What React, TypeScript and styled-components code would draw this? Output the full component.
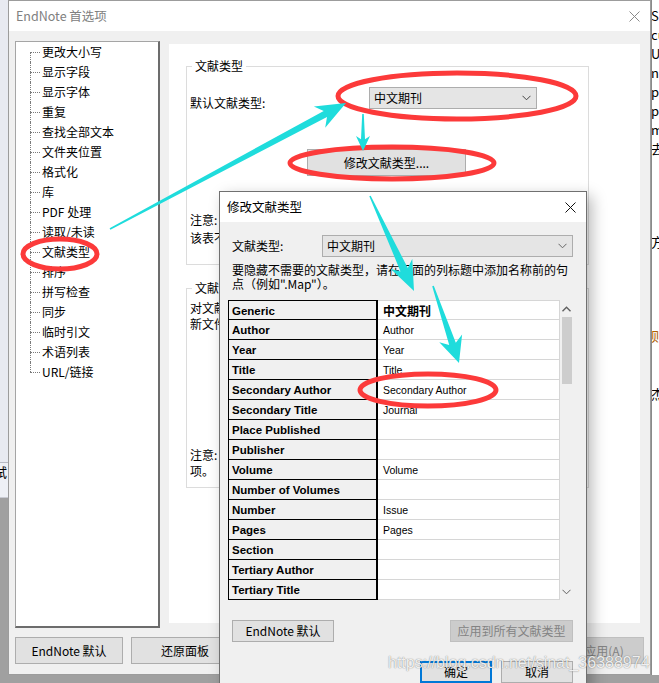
import React from 'react';
import styled, { createGlobalStyle, css } from 'styled-components';

const GlobalStyle = createGlobalStyle`
  html, body {
    margin: 0;
    padding: 0;
    width: 659px;
    height: 683px;
    overflow: hidden;
    background: #a0a0a0;
  }
  body {
    font-family: "Noto Sans CJK SC", "Noto Sans", sans-serif;
    font-size: 12px;
    color: #000;
  }
  * {
    box-sizing: border-box;
  }
`;

const Page = styled.div`
  position: relative;
  width: 659px;
  height: 683px;
  display: flex;
  align-items: flex-start;
  overflow: hidden;
`;

const LeftStrip = styled.div`
  width: 8px;
  height: 683px;
  display: flex;
  flex-direction: column;
`;

const LeftTop = styled.div`
  height: 462px;
  background: #e8eaf1;
`;

const LeftBand = styled.div`
  height: 36px;
  background: #eef0f5;
  border-top: 1px solid #b8bac4;
  border-bottom: 1px solid #c8cad2;
  overflow: hidden;
  font-size: 13px;
  line-height: 16px;
  padding-top: 1px;
  text-indent: -6px;
  white-space: nowrap;
`;

const LeftRest = styled.div`
  flex: 1;
  background: #a0a0a0;
`;

const RightStrip = styled.div`
  width: 8px;
  height: 675px;
  background: #fff;
  border-left: 1px solid #8a8a8a;
  overflow: hidden;
  display: flex;
  flex-direction: column;
  padding-top: 6px;
  font-size: 13px;
  line-height: 19px;
  white-space: nowrap;
`;

const StripLine = styled.div<{ $gap?: number; $tone?: string }>`
  margin-top: ${p => p.$gap ?? 0}px;
  color: ${p => p.$tone ?? '#000'};
  text-indent: -1px;
`;

const MainWindow = styled.div`
  width: 643px;
  height: 675px;
  background: #f0f0f0;
  border: 1px solid #9c9c9c;
  display: flex;
  flex-direction: column;
`;

const TitleBar = styled.div<{ $active?: boolean }>`
  height: 30px;
  flex: none;
  background: #fff;
  display: flex;
  align-items: center;
  justify-content: space-between;
  padding: 0 10px 0 7px;
  color: ${p => (p.$active ? '#000' : '#808080')};
  font-size: 12.5px;
  line-height: 16px;
`;

const CloseIcon: React.FC<{ color: string }> = ({ color }) => (
  <svg width="11" height="11" viewBox="0 0 11 11">
    <path d="M0.5 0.5 L10.5 10.5 M10.5 0.5 L0.5 10.5" stroke={color} strokeWidth="1" fill="none" />
  </svg>
);

const ChevronDown: React.FC<{ color?: string }> = ({ color = '#444' }) => (
  <svg width="9" height="6" viewBox="0 0 9 6">
    <path d="M0.5 0.8 L4.5 4.8 L8.5 0.8" stroke={color} strokeWidth="1" fill="none" />
  </svg>
);

const ChevronUp: React.FC = () => (
  <svg width="9" height="6" viewBox="0 0 9 6">
    <path d="M0.5 5.2 L4.5 1.2 L8.5 5.2" stroke="#606060" strokeWidth="1.4" fill="none" />
  </svg>
);

const WindowBody = styled.div`
  flex: 1;
  padding: 10px 10px 0 6px;
  display: flex;
  flex-direction: column;
`;

const MainRow = styled.div`
  display: flex;
  align-items: flex-start;
  gap: 9px;
`;

const TreePanel = styled.div`
  width: 145px;
  height: 587px;
  background: #fff;
  border-top: 1px solid #a5a5a5;
  border-left: 1px solid #a5a5a5;
  border-right: 2px solid #6c6c6c;
  border-bottom: 2px solid #6c6c6c;
`;

const TreeItem = styled.div<{ $first?: boolean; $last?: boolean }>`
  position: relative;
  height: 20px;
  line-height: 20px;
  padding-left: 26px;
  white-space: nowrap;

  &::before {
    content: '';
    position: absolute;
    left: 14px;
    top: 10px;
    width: 10px;
    border-top: 1px dotted #7a7a7a;
  }

  &::after {
    content: '';
    position: absolute;
    left: 14px;
    top: ${p => (p.$first ? 10 : 0)}px;
    bottom: ${p => (p.$last ? 10 : 0)}px;
    border-left: 1px dotted #7a7a7a;
  }
`;

const PrefPanel = styled.div`
  width: 471px;
  height: 579px;
  margin-top: 3px;
  background: #fff;
  padding: 14px 0 0 17px;
  display: flex;
  flex-direction: column;
  gap: 15px;
`;

const GroupBox = styled.fieldset<{ $height: number }>`
  margin: 0;
  width: 403px;
  height: ${p => p.$height}px;
  min-width: 0;
  border: 1px solid #dcdcdc;
  padding: 0 3px;
`;

const Legend = styled.legend`
  margin-left: 2px;
  padding: 0 3px;
  line-height: 16px;
  font-size: 12px;
`;

const DefaultRow = styled.div`
  display: flex;
  align-items: flex-start;
  margin-top: 13px;
`;

const FieldLabel = styled.div<{ $width: number; $top?: number }>`
  width: ${p => p.$width}px;
  flex: none;
  padding-top: ${p => p.$top ?? 0}px;
  line-height: 16px;
  white-space: nowrap;
`;

const SelectBox = styled.div<{ $width?: number }>`
  ${p =>
    p.$width
      ? css`
          width: ${p.$width}px;
        `
      : css`
          flex: 1;
        `}
  height: 22px;
  background: #e5e5e5;
  border: 1px solid #adadad;
  display: flex;
  align-items: center;
  justify-content: space-between;
  padding: 0 5px 0 4px;
  font-size: 12px;
  line-height: 16px;
`;

const ButtonRow = styled.div<{ $top: number; $left?: number; $justify?: string; $gap?: number }>`
  display: flex;
  margin-top: ${p => p.$top}px;
  padding-left: ${p => p.$left ?? 0}px;
  justify-content: ${p => p.$justify ?? 'flex-start'};
  gap: ${p => p.$gap ?? 0}px;
`;

const WinButton = styled.div<{ $width: number; $height: number; $disabled?: boolean; $focused?: boolean }>`
  width: ${p => p.$width}px;
  height: ${p => p.$height}px;
  flex: none;
  display: flex;
  align-items: center;
  justify-content: center;
  background: ${p => (p.$disabled ? '#cccccc' : '#e1e1e1')};
  border: ${p => (p.$focused ? '2px solid #0078d7' : `1px solid ${p.$disabled ? '#bfbfbf' : '#adadad'}`)};
  color: ${p => (p.$disabled ? '#838383' : '#000')};
  font-size: 12px;
  line-height: 16px;
  white-space: nowrap;
`;

const NoteText = styled.div<{ $top: number; $lh: number }>`
  margin-top: ${p => p.$top}px;
  line-height: ${p => p.$lh}px;
  white-space: pre;
`;

const FooterRow = styled.div`
  display: flex;
  gap: 8px;
  margin-top: 9px;
`;

const FooterSpacer = styled.div`
  flex: 1;
`;

const ApplyWrap = styled.div`
  margin-right: -4px;
`;

/* ---------- dialog ---------- */

const Dialog = styled.div`
  position: absolute;
  left: 219px;
  top: 191px;
  width: 368px;
  height: 500px;
  background: #f0f0f0;
  border: 1px solid #707070;
  box-shadow: 5px 5px 14px rgba(0, 0, 0, 0.28);
  display: flex;
  flex-direction: column;
  z-index: 5;
`;

const DialogBody = styled.div`
  padding: 13px 13px 0 12px;
  display: flex;
  flex-direction: column;
`;

const TypeRow = styled.div`
  display: flex;
  align-items: center;
  height: 22px;
`;

const Hint = styled.div`
  margin-top: 6px;
  line-height: 14px;
  white-space: pre;
  margin-right: -12px;
`;

const TableArea = styled.div`
  display: flex;
  margin-top: 9px;
  margin-left: -4px;
  height: 300px;
`;

const FieldGrid = styled.div`
  display: grid;
  grid-template-columns: 150px 182px;
  grid-auto-rows: 20px;
  align-content: start;
`;

const NameCell = styled.div<{ $first?: boolean }>`
  background: #f0f0f0;
  border-left: 1px solid #000;
  border-right: 2px solid #000;
  border-bottom: 1px solid #000;
  border-top: ${p => (p.$first ? '1px solid #000' : 'none')};
  padding: 1px 0 0 3px;
  font-family: "Liberation Sans", Arial, sans-serif;
  font-weight: bold;
  font-size: 11.5px;
  line-height: 18px;
  white-space: nowrap;
  overflow: hidden;
`;

const ValueCell = styled.div<{ $first?: boolean }>`
  background: #fff;
  border-right: 1px solid #d6d6d6;
  border-bottom: 1px solid #d6d6d6;
  border-top: ${p => (p.$first ? '1px solid #d6d6d6' : 'none')};
  padding: 1px 0 0 5px;
  font-family: ${p => (p.$first ? '"Noto Sans CJK SC", sans-serif' : '"Liberation Sans", Arial, sans-serif')};
  font-weight: ${p => (p.$first ? 'bold' : 'normal')};
  font-size: ${p => (p.$first ? '12px' : '10.5px')};
  line-height: 18px;
  white-space: nowrap;
  overflow: hidden;
`;

const ScrollBar = styled.div`
  width: 17px;
  height: 300px;
  background: #f0f0f0;
  display: flex;
  flex-direction: column;
`;

const ScrollArrow = styled.div`
  height: 17px;
  flex: none;
  display: flex;
  align-items: center;
  justify-content: center;
`;

const ScrollThumb = styled.div`
  height: 67px;
  margin: 0 1px 0 2px;
  background: #cdcdcd;
`;

const ScrollGap = styled.div`
  flex: 1;
`;

const Watermark = styled.div`
  position: absolute;
  left: 388px;
  top: 653px;
  z-index: 8;
  font-family: "Liberation Sans", Arial, sans-serif;
  font-size: 16px;
  line-height: 20px;
  color: rgba(255, 255, 255, 0.88);
  text-shadow: 0 0 1px rgba(0, 0, 0, 0.45), 0 0 2px rgba(0, 0, 0, 0.15);
  white-space: nowrap;
`;

const Annotations = styled.svg`
  position: absolute;
  left: 0;
  top: 0;
  z-index: 10;
  pointer-events: none;
`;

const treeItems = [
  '更改大小写', '显示字段', '显示字体', '重复', '查找全部文本', '文件夹位置', '格式化', '库',
  'PDF 处理', '读取/未读', '文献类型', '排序', '拼写检查', '同步', '临时引文', '术语列表', 'URL/链接',
];

const fields: [string, string][] = [
  ['Generic', '中文期刊'],
  ['Author', 'Author'],
  ['Year', 'Year'],
  ['Title', 'Title'],
  ['Secondary Author', 'Secondary Author'],
  ['Secondary Title', 'Journal'],
  ['Place Published', ''],
  ['Publisher', ''],
  ['Volume', 'Volume'],
  ['Number of Volumes', ''],
  ['Number', 'Issue'],
  ['Pages', 'Pages'],
  ['Section', ''],
  ['Tertiary Author', ''],
  ['Tertiary Title', ''],
];

// tapered arrow like the screenshot annotation tool draws
function arrowPoints(x1: number, y1: number, x2: number, y2: number, head: number, half: number, shaft: number) {
  const dx = x2 - x1;
  const dy = y2 - y1;
  const len = Math.hypot(dx, dy);
  const ux = dx / len;
  const uy = dy / len;
  const px = -uy;
  const py = ux;
  const neckX = x2 - ux * head * 0.78;
  const neckY = y2 - uy * head * 0.78;
  const barbX = x2 - ux * head;
  const barbY = y2 - uy * head;
  const pts = [
    [x1 + px * 0.8, y1 + py * 0.8],
    [neckX + px * shaft, neckY + py * shaft],
    [barbX + px * half, barbY + py * half],
    [x2, y2],
    [barbX - px * half, barbY - py * half],
    [neckX - px * shaft, neckY - py * shaft],
    [x1 - px * 0.8, y1 - py * 0.8],
  ];
  return pts.map(p => `${p[0].toFixed(1)},${p[1].toFixed(1)}`).join(' ');
}

const arrows = [
  { x1: 110, y1: 229, x2: 346, y2: 103, head: 30, half: 12, shaft: 3.5 },
  { x1: 363, y1: 114, x2: 363, y2: 151, head: 15, half: 7, shaft: 2 },
  { x1: 370, y1: 196, x2: 414, y2: 291, head: 30, half: 12, shaft: 4 },
  { x1: 433, y1: 286, x2: 459, y2: 363, head: 26, half: 12, shaft: 3.5 },
];

const ellipses = [
  { cx: 457, cy: 96, rx: 119, ry: 23 },
  { cx: 392, cy: 163, rx: 102, ry: 16 },
  { cx: 60, cy: 254, rx: 37, ry: 15 },
  { cx: 428, cy: 390, rx: 68, ry: 16 },
];

const App: React.FC = () => {
  return (
    <>
      <GlobalStyle />
      <Page>
        <LeftStrip>
          <LeftTop />
          <LeftBand>试</LeftBand>
          <LeftRest />
        </LeftStrip>

        <MainWindow>
          <TitleBar>
            <span>EndNote 首选项</span>
            <CloseIcon color="#8a8a8a" />
          </TitleBar>
          <WindowBody>
            <MainRow>
              <TreePanel>
                {treeItems.map((t, i) => (
                  <TreeItem key={t} $first={i === 0} $last={i === treeItems.length - 1}>
                    {t}
                  </TreeItem>
                ))}
              </TreePanel>
              <PrefPanel>
                <GroupBox $height={207}>
                  <Legend>文献类型</Legend>
                  <DefaultRow>
                    <FieldLabel $width={179} $top={8}>默认文献类型:</FieldLabel>
                    <SelectBox $width={168}>
                      <span>中文期刊</span>
                      <ChevronDown />
                    </SelectBox>
                  </DefaultRow>
                  <ButtonRow $top={38} $left={117}>
                    <WinButton $width={159} $height={27}>修改文献类型....</WinButton>
                  </ButtonRow>
                  <NoteText $top={35} $lh={18}>
                    {'注意: 对文献类型所做的修改将影响所有\n该表不能撤销。'}
                  </NoteText>
                </GroupBox>
                <GroupBox $height={208}>
                  <Legend>文献类型表</Legend>
                  <NoteText $top={4} $lh={16}>
                    {'对文献类型表所做的更改将保存在\n新文件中。'}
                  </NoteText>
                  <NoteText $top={115} $lh={16}>
                    {'注意: 表中只显示已启用的\n项。'}
                  </NoteText>
                </GroupBox>
              </PrefPanel>
            </MainRow>
            <FooterRow>
              <WinButton $width={108} $height={27}>EndNote 默认</WinButton>
              <WinButton $width={108} $height={27}>还原面板</WinButton>
              <FooterSpacer />
              <ApplyWrap>
                <WinButton $width={80} $height={27} $disabled>应用(A)</WinButton>
              </ApplyWrap>
            </FooterRow>
          </WindowBody>
        </MainWindow>

        <RightStrip>
          <StripLine>SD</StripLine>
          <StripLine>cu</StripLine>
          <StripLine>Un</StripLine>
          <StripLine>n</StripLine>
          <StripLine>p</StripLine>
          <StripLine>p</StripLine>
          <StripLine>m</StripLine>
          <StripLine>去</StripLine>
          <StripLine $gap={74}>方</StripLine>
          <StripLine $gap={75} $tone="#b06000">则</StripLine>
          <StripLine $gap={39}>杰</StripLine>
        </RightStrip>

        <Dialog>
          <TitleBar $active>
            <span>修改文献类型</span>
            <CloseIcon color="#111" />
          </TitleBar>
          <DialogBody>
            <TypeRow>
              <FieldLabel $width={90}>文献类型:</FieldLabel>
              <SelectBox>
                <span>中文期刊</span>
                <ChevronDown color="#666" />
              </SelectBox>
            </TypeRow>
            <Hint>{'要隐藏不需要的文献类型，请在下面的列标题中添加名称前的句\n点（例如".Map"）。'}</Hint>
            <TableArea>
              <FieldGrid>
                {fields.map(([name, value], i) => (
                  <React.Fragment key={name}>
                    <NameCell $first={i === 0}>{name}</NameCell>
                    <ValueCell $first={i === 0}>{value}</ValueCell>
                  </React.Fragment>
                ))}
              </FieldGrid>
              <ScrollBar>
                <ScrollArrow>
                  <ChevronUp />
                </ScrollArrow>
                <ScrollThumb />
                <ScrollGap />
                <ScrollArrow>
                  <ChevronDown color="#606060" />
                </ScrollArrow>
              </ScrollBar>
            </TableArea>
            <ButtonRow $top={20} $justify="space-between">
              <WinButton $width={102} $height={22}>EndNote 默认</WinButton>
              <WinButton $width={123} $height={22} $disabled>应用到所有文献类型</WinButton>
            </ButtonRow>
            <ButtonRow $top={19} $justify="flex-end" $gap={9}>
              <WinButton $width={72} $height={22} $focused>确定</WinButton>
              <WinButton $width={72} $height={22}>取消</WinButton>
            </ButtonRow>
          </DialogBody>
        </Dialog>

        <Watermark>https://blog.csdn.net/sinat_36388974</Watermark>

        <Annotations width="659" height="683" viewBox="0 0 659 683">
          {ellipses.map((e, i) => (
            <ellipse key={i} cx={e.cx} cy={e.cy} rx={e.rx} ry={e.ry} fill="none" stroke="#fc3a3a" strokeWidth="5" />
          ))}
          {arrows.map((a, i) => (
            <polygon key={i} points={arrowPoints(a.x1, a.y1, a.x2, a.y2, a.head, a.half, a.shaft)} fill="#1fdcdc" />
          ))}
        </Annotations>
      </Page>
    </>
  );
};

export default App;
